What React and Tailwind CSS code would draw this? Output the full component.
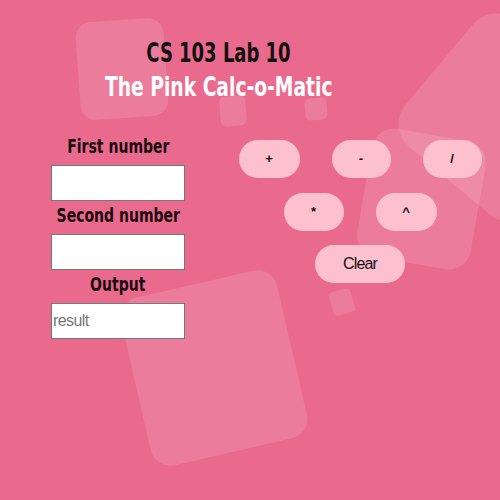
import React from "react";

const shapes = [
  "left-[78px] top-[20px] w-[88px] h-[98px] rotate-[-4deg] rounded-[16px]",
  "left-[220px] top-[96px] w-[26px] h-[30px] rotate-[-4deg] rounded-[6px]",
  "left-[305px] top-[98px] w-[22px] h-[22px] rotate-[-4deg] rounded-[5px]",
  "left-[420px] top-[35px] w-[165px] h-[165px] rotate-[40deg] rounded-[30px]",
  "left-[364px] top-[134px] w-[115px] h-[130px] rotate-[10deg] rounded-[22px]",
  "left-[134px] top-[282px] w-[160px] h-[172px] rotate-[-13deg] rounded-[20px]",
  "left-[331px] top-[290px] w-[22px] h-[24px] rotate-[-15deg] rounded-[4px]",
];

const Btn = ({ children, w = "w-[61px]", big }) => (
  <button
    className={`${w} h-[38px] rounded-[19px] bg-[#fdc0cf] text-[#111] ${
      big ? "text-[16px] tracking-[-0.8px]" : "text-[13px] font-bold"
    } font-['Liberation_Sans',Arial,sans-serif]`}
  >
    {children}
  </button>
);

const Field = ({ label, placeholder, first }) => (
  <>
    <div
      className={`${
        first ? "" : "mt-[3px]"
      } mb-[8px] text-[19px] font-bold text-[#1a0a10] leading-[22px] scale-x-[0.82] font-['DejaVu_Sans_Condensed','DejaVu_Sans',sans-serif]`}
    >
      {label}
    </div>
    <input
      placeholder={placeholder}
      className="w-[134px] h-[36px] bg-white border border-[#777] px-[1px] text-[16px] tracking-[-0.6px] text-[#333] placeholder-[#777] font-['Liberation_Sans',Arial,sans-serif] outline-none"
    />
  </>
);

export default function App() {
  return (
    <div className="relative w-[500px] h-[500px] overflow-hidden bg-[#ea6a8e]">
      {shapes.map((s, i) => (
        <div key={i} className={`absolute bg-white/[0.12] ${s}`} />
      ))}
      <div className="relative flex flex-col">
        <div className="flex flex-col items-center w-[437px] pt-[37px]">
          <h1 className="text-[27px] font-bold leading-[32px] text-[#111] scale-x-[0.74] font-['DejaVu_Sans_Condensed','DejaVu_Sans',sans-serif]">
            CS 103 Lab 10
          </h1>
          <h2 className="mt-[2px] text-[27px] font-bold leading-[32px] text-white scale-x-[0.77] font-['DejaVu_Sans_Condensed','DejaVu_Sans',sans-serif]">
            The Pink Calc-o-Matic
          </h2>
        </div>
        <div className="flex mt-[32px]">
          <div className="w-[236px] flex flex-col items-center">
            <Field label="First number" first />
            <Field label="Second number" />
            <Field label="Output" placeholder="result" />
          </div>
          <div className="w-[248px] flex flex-col items-center pt-[5px]">
            <div className="flex gap-[32px]">
              <Btn>+</Btn>
              <Btn w="w-[59px]">-</Btn>
              <Btn w="w-[59px]">/</Btn>
            </div>
            <div className="flex gap-[32px] mt-[15px]">
              <Btn w="w-[60px]">*</Btn>
              <Btn>^</Btn>
            </div>
            <div className="mt-[14px]">
              <Btn w="w-[90px]" big>
                Clear
              </Btn>
            </div>
          </div>
        </div>
      </div>
    </div>
  );
}
